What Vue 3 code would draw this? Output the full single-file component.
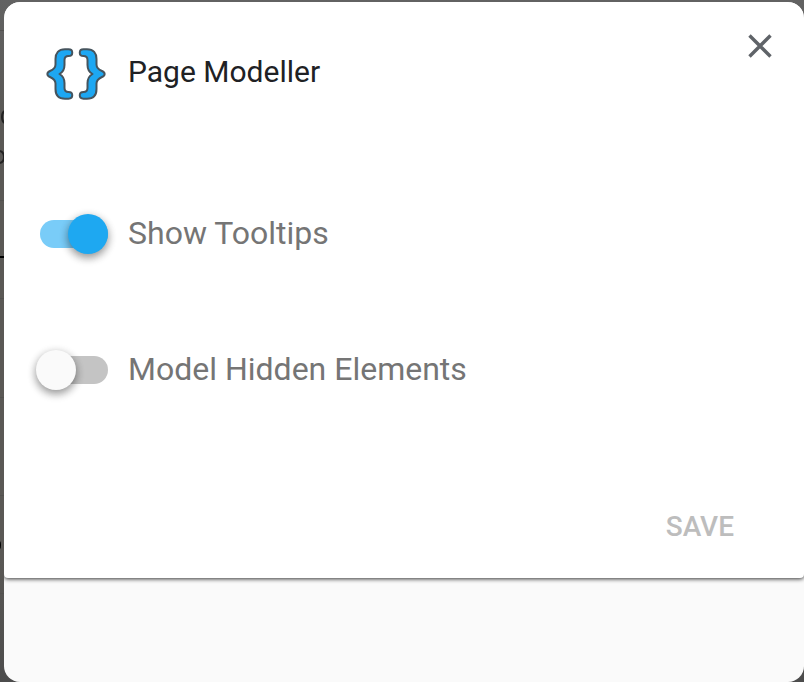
<script setup>
import { ref } from 'vue'

const options = ref([
  { id: 'tooltips', label: 'Show Tooltips', on: true },
  { id: 'hidden', label: 'Model Hidden Elements', on: false },
])

const brace =
  'M19 2.3H22.500C27.500 2.3 27.500 9 22.500 9C19.500 9 18.500 10 18.500 13V18C18.500 22.500 17 25 13.500 27C17 29 18.500 31.500 18.500 36V41C18.500 44 19.500 45 22.500 45C27.500 45 27.500 51.700 22.500 51.700H19C12.500 51.700 9.500 48 9.500 42V36.500C9.500 33 7.500 31.500 4 30C0.500 28.500 0.500 25.500 4 24C7.500 22.500 9.500 21 9.500 17.500V12C9.500 6 12.500 2.300 19 2.300Z'
</script>

<template>
  <div class="backdrop">
    <svg class="page-edge" width="4" height="682" viewBox="0 0 4 682" aria-hidden="true">
      <path d="M0 30.5H4M0 200.5H4M0 298.5H4M0 397.5H4M0 495.5H4M0 593.5H4" stroke="#52514f" />
      <path d="M5 111Q2 112 2 117T5 123" fill="none" stroke="#222" stroke-width="2" />
      <path d="M0 151Q4 152 4 157T0 163" fill="none" stroke="#222" stroke-width="2" />
      <path d="M0 257H4" stroke="#000" stroke-width="2" />
      <path d="M0 541Q1 542 1 545T0 549Z" fill="#000" />
    </svg>
    <main class="dialog">
      <form class="card" @submit.prevent>
        <header class="head">
          <svg class="logo" width="60" height="54" viewBox="0 0 60 54" aria-hidden="true">
            <g fill="#1da7f2" stroke="#46545d" stroke-width="2" stroke-linejoin="round">
              <path :d="brace" />
              <path :d="brace" transform="matrix(-1 0 0 1 60 0)" />
            </g>
          </svg>
          <h1 class="title">Page Modeller</h1>
          <button class="close" type="button" aria-label="Close">
            <svg width="24" height="24" viewBox="0 0 24 24" aria-hidden="true">
              <path d="M1.500 1.500L22.500 22.500M22.500 1.500L1.500 22.500" stroke="#5f6368" stroke-width="3.4" />
            </svg>
          </button>
        </header>
        <div class="options">
          <label v-for="o in options" :key="o.id" class="option" :for="o.id">
            <input :id="o.id" v-model="o.on" class="switch" type="checkbox" role="switch" />
            <span>{{ o.label }}</span>
          </label>
        </div>
        <footer class="actions">
          <button class="save" type="submit" disabled>SAVE</button>
        </footer>
      </form>
    </main>
  </div>
</template>

<style>
body {
  margin: 0;
  background: #5a5957;
}
</style>

<style scoped>
.backdrop {
  display: flex;
  min-height: 100vh;
  box-sizing: border-box;
  overflow: hidden;
  background: linear-gradient(#626262, #5a5855 120px, #5a5855 560px, #4c4c4c);
  font-family: Roboto, "Liberation Sans", sans-serif;
}
.page-edge {
  flex: none;
}
.dialog {
  flex: 1;
  margin-top: 2px;
  border-radius: 16px;
  background: #fafafa;
  overflow: hidden;
}
.card {
  background: #fff;
  border-radius: 0 0 4px 4px;
  box-shadow: 0 1px 4px rgba(0, 0, 0, 0.8);
}
.head {
  display: flex;
  align-items: flex-start;
  padding: 32px 32px 0 42px;
}
.logo {
  flex: none;
  margin-top: 13px;
}
.title {
  flex: 1;
  margin: 18px 0 0 22px;
  font-size: 30px;
  line-height: 40px;
  font-weight: 400;
  color: #202124;
}
.close {
  display: flex;
  padding: 0;
  border: 0;
  background: none;
  cursor: pointer;
}
.options {
  display: grid;
  gap: 96px;
  padding: 113px 32px 0 32px;
}
.option {
  display: flex;
  align-items: flex-start;
  gap: 20px;
  font-size: 32px;
  line-height: 38px;
  color: #757575;
}
.switch {
  appearance: none;
  display: flex;
  flex: none;
  position: relative;
  box-sizing: border-box;
  width: 72px;
  height: 40px;
  margin: 0;
  padding: 6px 0 6px 4px;
}
.switch::before {
  content: "";
  flex: 1;
  border-radius: 14px;
  background: #c4c4c4;
}
.switch::after {
  content: "";
  position: absolute;
  left: 0;
  top: 0;
  width: 40px;
  height: 40px;
  border-radius: 50%;
  background: #fafafa;
  box-shadow: 0 4px 8px rgba(0, 0, 0, 0.32), 0 2px 10px rgba(0, 0, 0, 0.16);
}
.switch:checked::before {
  background: #79ccf8;
}
.switch:checked::after {
  left: auto;
  right: 0;
  background: #1ea8f1;
}
.actions {
  display: flex;
  justify-content: flex-end;
  padding: 101px 38px 15px;
}
.save {
  padding: 16px 32px;
  border: 0;
  background: none;
  font: 500 28px/40px Roboto, "Liberation Sans", sans-serif;
  color: #bdbdbd;
}
</style>
